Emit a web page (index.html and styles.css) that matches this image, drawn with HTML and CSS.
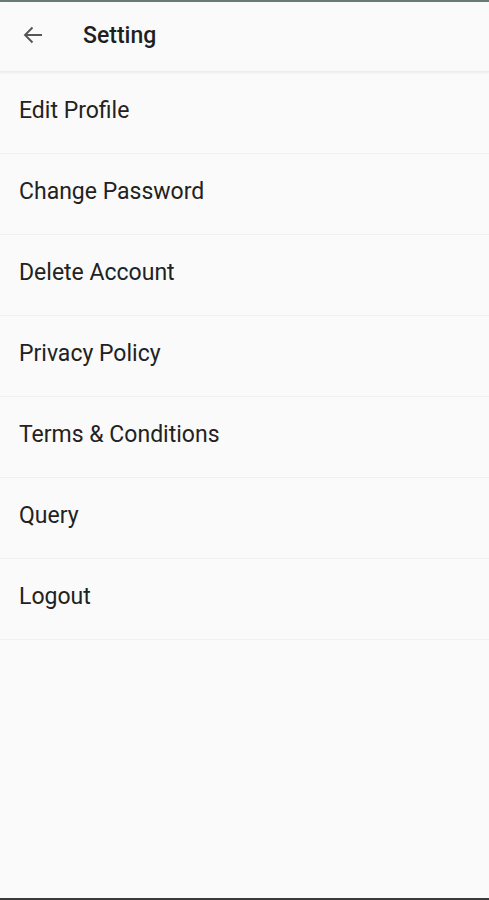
FILE: index.html
```html
<!DOCTYPE html>
<html>
<head>
  <link rel="stylesheet" href="styles.css">
</head>
<body>
  <div id="screen">
    <div id="toolbar">
      <span class="back">
        <svg width="22" height="22" viewBox="0 0 22 22">
          <path d="M20 11H3.5M10.5 3.5L3 11l7.5 7.5" fill="none" stroke="#555" stroke-width="1.9"/>
        </svg>
      </span>
      <span class="title">Setting</span>
    </div>
    <div id="menu">
      <div class="item">Edit Profile</div>
      <div class="item">Change Password</div>
      <div class="item">Delete Account</div>
      <div class="item">Privacy Policy</div>
      <div class="item">Terms &amp; Conditions</div>
      <div class="item">Query</div>
      <div class="item">Logout</div>
    </div>
  </div>
</body>
</html>
```

FILE: styles.css
```css
html, body {
  margin: 0;
  padding: 0;
}

body {
  font-family: Roboto, "Noto Sans", sans-serif;
  background-color: #fafafa;
}

#screen {
  height: 900px;
  box-sizing: border-box;
  border-top: 2px solid #6a7c72;
  border-bottom: 2px solid #3a3a3a;
  background-color: #fafafa;
}

#toolbar {
  height: 70px;
  box-sizing: border-box;
  padding-bottom: 3px;
  display: flex;
  align-items: center;
  border-bottom: 1px solid #ececec;
  box-shadow: 0 1px 2px rgba(0, 0, 0, 0.06);
}

#toolbar .back {
  display: flex;
  width: 22px;
  height: 22px;
  margin-left: 22px;
}

#toolbar .title {
  margin-left: 39px;
  font-size: 23px;
  font-weight: 500;
  color: #1f1f1f;
}

#menu {
  padding-top: 1px;
}

.item {
  height: 81px;
  box-sizing: border-box;
  padding-bottom: 6px;
  display: flex;
  align-items: center;
  padding-left: 19px;
  font-size: 23px;
  color: #222;
  border-bottom: 1px solid #f0f0f0;
}
```
